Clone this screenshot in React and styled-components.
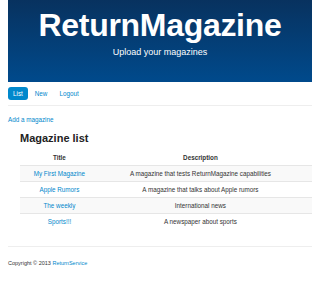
import React from 'react';
import styled, {createGlobalStyle} from 'styled-components';

const GlobalStyle = createGlobalStyle`
    html, body {
        margin: 0;
        padding: 0;
        background: #fff;
        font-family: "Liberation Sans", Arial, sans-serif;
        color: #333;
    }
`;

const StyledPage = styled.div`
    width: 320px;
    height: 302px;
    padding: 0 8px;
    box-sizing: border-box;
    overflow: hidden;
`;

const StyledHeader = styled.div`
    height: 82px;
    background: linear-gradient(to bottom, #08325f 0%, #004a8c 100%);
    color: #fff;
    text-align: center;
    padding-top: 9px;
    box-sizing: border-box;
`;

const StyledTitle = styled.h1`
    margin: 0;
    font-size: 32px;
    line-height: 33px;
    font-weight: bold;
    letter-spacing: -0.3px;
`;

const StyledSubtitle = styled.div`
    margin-top: 5px;
    font-size: 9px;
`;

const StyledNav = styled.div`
    display: flex;
    align-items: center;
    gap: 2px;
    padding: 5px 0 5px;
    border-bottom: 1px solid #eee;
`;

const StyledNavItem = styled.a`
    font-size: 6.3px;
    line-height: 13px;
    padding: 0 5px;
    border-radius: 3px;
    color: ${props => props.active ? "#fff" : "#0088cc"};
    background: ${props => props.active ? "#0088cc" : "transparent"};
    text-decoration: none;
`;

const StyledLink = styled.a`
    color: #0088cc;
    text-decoration: none;
`;

const StyledAddLink = styled(StyledLink)`
    display: block;
    font-size: 6.3px;
    margin-top: 10px;
`;

const StyledContent = styled.div`
    padding-left: 12px;
`;

const StyledHeading = styled.h2`
    margin: 9px 0 6px;
    font-size: 11px;
    font-weight: bold;
    color: #222;
`;

const StyledTable = styled.table`
    width: 100%;
    border-collapse: collapse;
    font-size: 6.3px;
`;

const StyledHeadCell = styled.th`
    font-weight: bold;
    height: 15px;
    text-align: center;
    padding: 0 ${props => props.padRight || "0"} 0 0;
    width: ${props => props.width};
`;

const StyledRow = styled.tr`
    background: ${props => props.dark ? "#f9f9f9" : "#fff"};
    border-top: 1px solid #e6e6e6;
`;

const StyledCell = styled.td`
    height: 15px;
    text-align: center;
    padding: 0 ${props => props.padRight || "0"} 0 0;
`;

const StyledFooter = styled.div`
    margin-top: 17px;
    border-top: 1px solid #eee;
    padding-top: 13px;
    font-size: 5.5px;
`;

const magazines = [
    {title: "My First Magazine", description: "A magazine that tests ReturnMagazine capabilities"},
    {title: "Apple Rumors", description: "A magazine that talks about Apple rumors"},
    {title: "The weekly", description: "International news"},
    {title: "Sports!!!", description: "A newspaper about sports"},
];

export default function App() {
    return (
        <StyledPage>
            <GlobalStyle/>
            <StyledHeader>
                <StyledTitle>ReturnMagazine</StyledTitle>
                <StyledSubtitle>Upload your magazines</StyledSubtitle>
            </StyledHeader>
            <StyledNav>
                <StyledNavItem active>List</StyledNavItem>
                <StyledNavItem>New</StyledNavItem>
                <StyledNavItem>Logout</StyledNavItem>
            </StyledNav>
            <StyledAddLink>Add a magazine</StyledAddLink>
            <StyledContent>
                <StyledHeading>Magazine list</StyledHeading>
                <StyledTable>
                    <thead>
                        <tr>
                            <StyledHeadCell width="27%">Title</StyledHeadCell>
                            <StyledHeadCell padRight="10px">Description</StyledHeadCell>
                        </tr>
                    </thead>
                    <tbody>
                        {magazines.map((m, i) => (
                            <StyledRow key={i} dark={!(i % 2)}>
                                <StyledCell><StyledLink>{m.title}</StyledLink></StyledCell>
                                <StyledCell padRight="10px">{m.description}</StyledCell>
                            </StyledRow>
                        ))}
                    </tbody>
                </StyledTable>
            </StyledContent>
            <StyledFooter>
                Copyright © 2013 <StyledLink>ReturnService</StyledLink>
            </StyledFooter>
        </StyledPage>
    );
}
